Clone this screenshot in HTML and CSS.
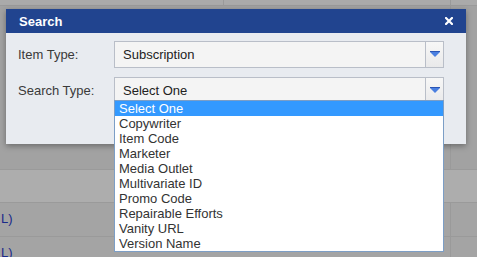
FILE: index.html
```html
<!DOCTYPE html>
<html lang="en">
<head>
    <meta charset="UTF-8">
    <title>Search</title>
    <link rel="stylesheet" href="styles.css">
</head>
<body>
    <div class="page">
        <div class="grid">
            <div class="row row-top">
                <div class="cell c-a"></div>
                <div class="cell c-b"></div>
                <div class="cell"></div>
            </div>
            <div class="row row-main">
                <div class="cell c-wide"></div>
                <div class="cell"></div>
            </div>
            <div class="row row-band"></div>
            <div class="row row-data">
                <div class="cell c-wide"><span class="tail">L)</span></div>
                <div class="cell"></div>
            </div>
            <div class="row row-data">
                <div class="cell c-wide"><span class="tail">L)</span></div>
                <div class="cell"></div>
            </div>
        </div>

        <div class="dialog">
            <div class="dialog-header">
                <span class="dialog-title">Search</span>
                <svg class="close" width="8" height="8" viewBox="0 0 8 8">
                    <path d="M1 1 L7 7 M7 1 L1 7" stroke="#fff" stroke-width="2.2" stroke-linecap="square"/>
                </svg>
            </div>
            <div class="dialog-body">
                <div class="field">
                    <label>Item Type:</label>
                    <div class="select">
                        <span class="select-value">Subscription</span>
                        <span class="select-btn"><i class="arrow"></i></span>
                    </div>
                </div>
                <div class="field">
                    <label>Search Type:</label>
                    <div class="select open">
                        <span class="select-value">Select One</span>
                        <span class="select-btn"><i class="arrow"></i></span>
                        <ul class="options">
                            <li class="active">Select One</li>
                            <li>Copywriter</li>
                            <li>Item Code</li>
                            <li>Marketer</li>
                            <li>Media Outlet</li>
                            <li>Multivariate ID</li>
                            <li>Promo Code</li>
                            <li>Repairable Efforts</li>
                            <li>Vanity URL</li>
                            <li>Version Name</li>
                        </ul>
                    </div>
                </div>
            </div>
        </div>
    </div>
</body>
</html>
```

FILE: styles.css
```css
body {
    margin: 0;
    font-family: "Liberation Sans", Arial, sans-serif;
    font-size: 13px;
    color: #333;
}

.page {
    position: relative;
    width: 477px;
    height: 257px;
    overflow: hidden;
    background: #a5a5a5;
}

/* table behind the overlay */
.row {
    display: flex;
    border-bottom: 1px solid #9a9a9a;
}

.cell {
    flex: 1;
}

.row-top {
    height: 5px;
    background: #aaaaaa;
}

.row-top .c-a {
    flex: 0 0 223px;
    border-right: 1px solid #9a9a9a;
}

.row-top .c-b {
    flex: 0 0 226px;
    border-right: 1px solid #9a9a9a;
}

.row-main {
    height: 163px;
    background: #a2a2a2;
}

.c-wide {
    flex: 0 0 450px;
    border-right: 1px solid #9a9a9a;
}

.row-band {
    height: 32px;
    background: #adadad;
}

.row-data {
    height: 33px;
    background: #a4a4a4;
}

.tail {
    display: block;
    padding-left: 1px;
    line-height: 32px;
    color: #1a2a8a;
}

/* dialog */
.dialog {
    position: absolute;
    left: 6px;
    top: 9px;
    width: 460px;
    height: 135px;
    background: #e8ebf0;
    box-shadow: 0 2px 6px rgba(0, 0, 0, 0.35);
}

.dialog-header {
    height: 24px;
    background: #21448f;
    display: flex;
    align-items: center;
    justify-content: space-between;
    padding: 0 13px 0 13px;
}

.dialog-title {
    color: #fff;
    font-weight: bold;
    font-size: 13px;
}

.close {
    display: block;
}

.dialog-body {
    padding: 8px 0 0 12px;
    display: flex;
    flex-direction: column;
    gap: 9px;
}

.field {
    display: flex;
    align-items: center;
}

.field label {
    width: 96px;
    color: #3a3a3a;
}

.select {
    position: relative;
    width: 328px;
    height: 25px;
    border: 1px solid #b9bec8;
    background: #f4f4f4;
    display: flex;
    align-items: center;
}

.select-value {
    flex: 1;
    padding-left: 8px;
    color: #222;
}

.select-btn {
    width: 17px;
    height: 25px;
    border-left: 1px solid #b9bec8;
    background: linear-gradient(#f7f7f7, #e9e9ea);
    display: flex;
    align-items: center;
    justify-content: center;
}

.arrow {
    display: block;
    width: 0;
    height: 0;
    border-left: 5px solid transparent;
    border-right: 5px solid transparent;
    border-top: 5px solid #4a7fe0;
    box-shadow: 0 -1px 0 #2a55b5;
}

.options {
    position: absolute;
    left: -1px;
    top: 22px;
    width: 328px;
    margin: 0;
    padding: 0;
    list-style: none;
    background: #fff;
    border: 1px solid #7c9ec6;
    z-index: 2;
}

.options li {
    height: 15px;
    line-height: 15px;
    padding-left: 4px;
    color: #333;
}

.options li.active {
    background: #3399ff;
    color: #fff;
}
```
